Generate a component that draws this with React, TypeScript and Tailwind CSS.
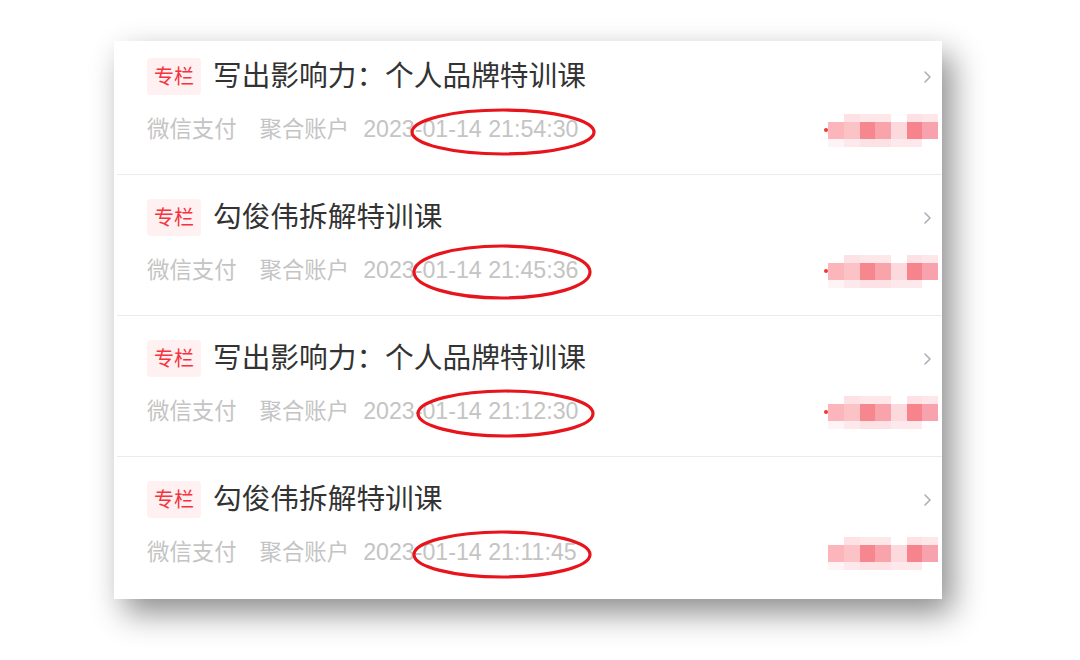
import React from 'react'

type Row = {
    title: string
    time: string
    ring: {left: number; top: number; width: number; height: number}
    dot: boolean
}

const rows: Row[] = [
    {
        title: '写出影响力：个人品牌特训课',
        time: '2023-01-14 21:54:30',
        ring: {left: 47, top: -10, width: 186, height: 48},
        dot: true,
    },
    {
        title: '勾俊伟拆解特训课',
        time: '2023-01-14 21:45:36',
        ring: {left: 49, top: -15, width: 180, height: 56},
        dot: true,
    },
    {
        title: '写出影响力：个人品牌特训课',
        time: '2023-01-14 21:12:30',
        ring: {left: 53, top: -11, width: 179, height: 49},
        dot: true,
    },
    {
        title: '勾俊伟拆解特训课',
        time: '2023-01-14 21:11:45',
        ring: {left: 49, top: -11, width: 180, height: 49},
        dot: false,
    },
]

const topCells = ['#ffffff', '#fde1e4', '#fde7e9', '#fde7e9', '#ffffff', '#fde1e4', '#fde7e9']
const midCells = ['#fbb5bb', '#fcc3c7', '#f7878f', '#f9a4ab', '#fcd9dc', '#f7838d', '#f8a2ad']
const lowCells = ['#fff4f5', '#fde9eb', '#fde2e5', '#fde2e5', '#fde9eb', '#fde9eb', '#ffffff']

// pixelated (blurred-out) amount on the right
const Mosaic = ({dot}: {dot: boolean}) => {
    return (
        <div className="flex items-center">
            <div className={`w-[4px] h-[4px] rounded-full ${dot ? 'bg-[#f2352f]' : 'bg-transparent'}`}></div>
            <div className="flex flex-col">
                <div className="flex">
                    {topCells.map((c, i) => (
                        <div key={i} className="w-[15.7px] h-[8px]" style={{background: c}}></div>
                    ))}
                </div>
                <div className="flex">
                    {midCells.map((c, i) => (
                        <div key={i} className="w-[15.7px] h-[17px]" style={{background: c}}></div>
                    ))}
                </div>
                <div className="flex">
                    {lowCells.map((c, i) => (
                        <div key={i} className="w-[15.7px] h-[8px]" style={{background: c}}></div>
                    ))}
                </div>
            </div>
        </div>
    )
}

const Chevron = () => (
    <svg width="9" height="14" viewBox="0 0 9 14" className="mr-[6px]">
        <path d="M2 2l5 5-5 5" fill="none" stroke="#aab0b8" strokeWidth="1.6" strokeLinecap="round" strokeLinejoin="round" />
    </svg>
)

const OrderRow = ({row, first, last}: {row: Row; first: boolean; last: boolean}) => {
    return (
        <div className={`flex flex-col pl-[33px] pr-[4px] ${first ? 'pt-[17px]' : 'pt-[24px]'} ${last ? 'pb-[31px]' : 'pb-[29px]'}`}>
            <div className="flex items-center h-[37px]">
                <span className="h-[37px] px-[7px] flex items-center rounded-[4px] bg-[#fff0f1] text-[#f5333f] text-[20px]">
                    专栏
                </span>
                <span className="ml-[12px] text-[28.7px] leading-none text-[#333333] whitespace-nowrap">
                    {row.title}
                </span>
                <div className="ml-auto">
                    <Chevron />
                </div>
            </div>
            <div className="flex items-center h-[30px] mt-[20px] text-[#c4c4c4]">
                <span className="text-[22.4px] leading-none">微信支付</span>
                <span className="ml-[23px] text-[22.4px] leading-none">聚合账户</span>
                <span className="relative ml-[14px] text-[23.2px] leading-none whitespace-nowrap">
                    {row.time}
                    <svg
                        className="absolute"
                        style={{left: row.ring.left, top: row.ring.top, width: row.ring.width, height: row.ring.height}}
                        viewBox={`0 0 ${row.ring.width} ${row.ring.height}`}
                    >
                        <ellipse
                            cx={row.ring.width / 2}
                            cy={row.ring.height / 2}
                            rx={row.ring.width / 2 - 2}
                            ry={row.ring.height / 2 - 2}
                            fill="none"
                            stroke="#e8141c"
                            strokeWidth="3.2"
                        />
                    </svg>
                </span>
                <div className="ml-auto">
                    <Mosaic dot={row.dot} />
                </div>
            </div>
        </div>
    )
}

const App = () => {
    return (
        <div className="w-[1080px] h-[660px] bg-white overflow-hidden font-['Liberation_Sans','Noto_Sans_CJK_SC',sans-serif]">
            <div className="ml-[114px] mt-[41px] w-[828px] bg-white shadow-[10px_14px_30px_rgba(0,0,0,0.45)]">
                {rows.map((row, i) => (
                    <div key={i}>
                        {i > 0 && <div className="ml-[3px] h-[1px] bg-[#ebebeb]"></div>}
                        <OrderRow row={row} first={i === 0} last={i === rows.length - 1} />
                    </div>
                ))}
            </div>
        </div>
    )
}

export default App
